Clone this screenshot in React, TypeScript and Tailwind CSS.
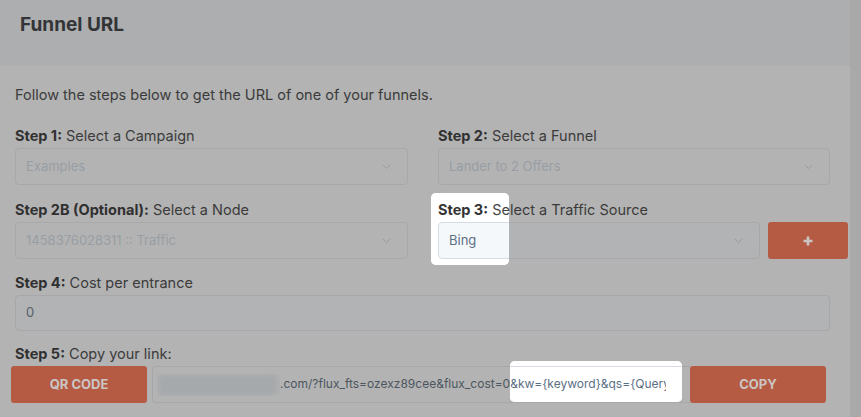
import React from "react";

const Chevron = ({ lit }: { lit: boolean }) => (
  <svg width="9" height="6" viewBox="0 0 9 6" className="shrink-0">
    <path d="M1 1 L4.5 4.5 L8 1" fill="none" stroke={lit ? "#9aa5b1" : "#979a9e"} strokeWidth="1" />
  </svg>
);

function Page({ lit }: { lit: boolean }) {
  const label = lit ? "text-[#444]" : "text-[#3b3b3b]";
  const bold = lit ? "text-[#333]" : "text-[#303030]";
  const selBox = lit
    ? "bg-[#f5f8fb] border-[#d6dce2]"
    : "bg-[#b2b3b4] border-[#a5a7aa]";
  const selDisabled = "bg-[#b3b3b3] border-[#a7a8aa]";
  const disText = "text-[#989ea4]";
  const valText = lit ? "text-[#5b6f84]" : "text-[#56606b]";
  const btn = "bg-[#b55b44] text-[#cbc6c4]";

  const Label = ({ b, t }: { b: string; t: string }) => (
    <div className={`text-[14.5px] leading-[20px] ${label} mb-[2px] whitespace-nowrap`}>
      <span className={`font-bold ${bold}`}>{b}</span> {t}
    </div>
  );

  const Select = ({ value, disabled, w }: { value: string; disabled?: boolean; w?: string }) => (
    <div
      className={`h-[37px] ${w ?? "w-full"} border rounded-[4px] flex items-center justify-between pl-[10px] pr-[16px] text-[13px] ${
        disabled ? selDisabled : selBox
      }`}
    >
      <span className={disabled ? disText : valText}>{value}</span>
      <Chevron lit={lit} />
    </div>
  );

  return (
    <div className={`w-[861px] h-[417px] flex font-['Inter',sans-serif] ${lit ? "bg-white" : "bg-[#b3b3b3]"}`}>
      <div className="w-[850px] flex flex-col">
        <div className={`h-[66px] pl-[20px] pt-[13px] ${lit ? "bg-[#f5f7fa]" : "bg-[#adaeb0]"}`}>
          <h1 className={`text-[19px] leading-[24px] font-bold ${lit ? "text-[#333]" : "text-[#333436]"}`}>Funnel URL</h1>
        </div>
        <div className="pl-[15px] pr-[20px] pt-[19px]">
          <p className={`text-[14.5px] leading-[20px] ${label}`}>
            Follow the steps below to get the URL of one of your funnels.
          </p>
          <div className="mt-[21px] grid grid-cols-[393px_392px] gap-x-[30px]">
            <div>
              <Label b="Step 1:" t="Select a Campaign" />
              <Select value="Examples" disabled />
            </div>
            <div>
              <Label b="Step 2:" t="Select a Funnel" />
              <Select value="Lander to 2 Offers" disabled />
            </div>
            <div className="mt-[15px]">
              <Label b="Step 2B (Optional):" t="Select a Node" />
              <Select value="1458376028311 :: Traffic" disabled />
            </div>
            <div className="mt-[15px]">
              <Label b="Step 3:" t="Select a Traffic Source" />
              <div className="flex gap-[8px]">
                <Select value="Bing" w="w-[322px] shrink-0" />
                <div className={`h-[37px] w-[80px] shrink-0 rounded-[3px] flex items-center justify-center ${btn}`}>
                  <svg width="10" height="10" viewBox="0 0 10 10">
                    <path d="M5 0.5 V9.5 M0.5 5 H9.5" stroke="#cbc6c4" strokeWidth="2.6" />
                  </svg>
                </div>
              </div>
            </div>
          </div>
          <div className="mt-[14px]">
            <Label b="Step 4:" t="Cost per entrance" />
            <div className={`h-[36px] w-[815px] border rounded-[4px] flex items-center pl-[10px] text-[13px] ${selBox}`}>
              <span className={valText}>0</span>
            </div>
          </div>
          <div className="mt-[13px]">
            <Label b="Step 5:" t="Copy your link:" />
            <div className="flex ml-[-4px]">
              <div className={`h-[37px] w-[136px] shrink-0 rounded-[3px] flex items-center justify-center text-[13px] font-bold ${btn}`}>
                QR CODE
              </div>
              <div
                className={`ml-[5px] h-[37px] w-[538px] shrink-0 border rounded-l-[4px] border-r-0 flex items-center pl-[4px] pr-[24px] overflow-hidden ${
                  lit ? "bg-white border-[#d6dce2]" : "bg-[#b3b3b3] border-[#a5a7aa]"
                }`}
              >
                <div className={`whitespace-nowrap overflow-hidden w-full text-[12px] ${lit ? "text-[#5b6f84]" : "text-[#4c5660]"}`}>
                  <span className="inline-block w-[123px] align-middle overflow-hidden">
                    <span className="block h-[22px] w-[121px] rounded-[3px] bg-[#a6a9ac] blur-[3px]" />
                  </span>
                  .com/?flux_fts=ozexz89cee&amp;flux_cost=0&amp;kw={"{keyword}"}&amp;qs={"{Query}"}
                </div>
              </div>
              <div className={`h-[37px] w-[136px] shrink-0 rounded-[3px] flex items-center justify-center text-[13px] font-bold ${btn}`}>
                COPY
              </div>
            </div>
          </div>
        </div>
      </div>
      <div className={`w-[11px] ${lit ? "bg-[#efefef]" : "bg-[#a9a9a9]"}`} />
    </div>
  );
}

export default function App() {
  return (
    <div className="relative w-[861px] h-[417px] overflow-hidden">
      <Page lit={false} />
      <div className="absolute left-[431px] top-[193px] w-[78px] h-[72px] rounded-[5px] overflow-hidden bg-white">
        <div className="absolute left-[-431px] top-[-193px]">
          <Page lit />
        </div>
      </div>
      <div className="absolute left-[510px] top-[361px] w-[172px] h-[41px] rounded-[5px] overflow-hidden bg-white">
        <div className="absolute left-[-510px] top-[-361px]">
          <Page lit />
        </div>
      </div>
    </div>
  );
}
